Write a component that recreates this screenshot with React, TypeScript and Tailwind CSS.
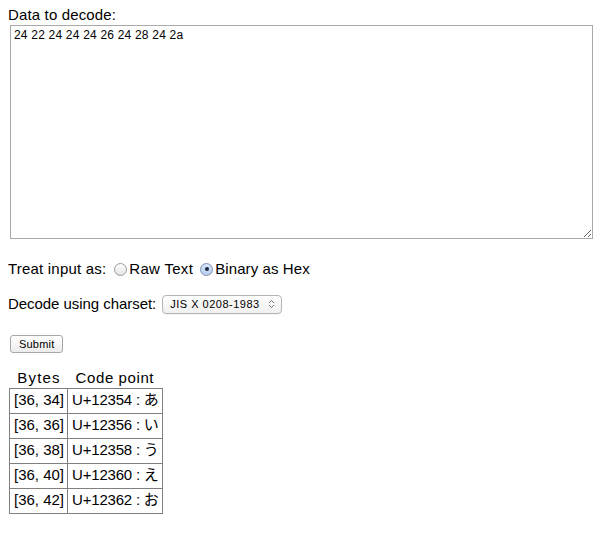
import React from "react";

export default function App() {
  const rows: [string, string, string][] = [
    ["[36, 34]", "U+12354", "あ"],
    ["[36, 36]", "U+12356", "い"],
    ["[36, 38]", "U+12358", "う"],
    ["[36, 40]", "U+12360", "え"],
    ["[36, 42]", "U+12362", "お"],
  ];
  return (
    <div className="w-[610px] h-[534px] bg-white text-black font-['Liberation_Sans','Noto_Sans_CJK_JP',sans-serif] pl-[8px] pt-[6px]">
      <div className="text-[15px] leading-[18px] tracking-[0.15px]">Data to decode:</div>
      <textarea
        className="block ml-[2px] mt-[1px] w-[583px] h-[214px] border border-[#a9a9a9] px-[3px] py-[2px] text-[12px] leading-[14px] tracking-[0.2px] resize-y outline-none font-['Liberation_Sans',sans-serif]"
        defaultValue="24 22 24 24 24 26 24 28 24 2a"
      />
      <div className="mt-[20px] h-[20px] flex items-center text-[15px]">
        <span className="tracking-[0.2px]">Treat input as:</span>
        <span className="ml-[8px] w-[13px] h-[13px] rounded-full border border-[#9a9a9a] bg-gradient-to-b from-[#fdfdfd] to-[#e4e4e4]" />
        <span className="ml-[2px] tracking-[0.3px]">Raw Text</span>
        <span className="ml-[7px] w-[13px] h-[13px] rounded-full border border-[#7c8fb3] bg-gradient-to-b from-[#d8e6f8] to-[#b6cdee] flex items-center justify-center">
          <span className="w-[4px] h-[4px] rounded-full bg-[#1e2a44]" />
        </span>
        <span className="ml-[2px] tracking-[0.1px]">Binary as Hex</span>
      </div>
      <div className="mt-[14px] h-[22px] flex items-center text-[15px]">
        <span className="tracking-[-0.05px]">Decode using charset:</span>
        <span className="ml-[6px] w-[120px] h-[19px] rounded-[4px] border border-[#b5b5b5] bg-gradient-to-b from-white to-[#f0f0f0] flex items-center pl-[7px] pr-[6px] text-[11px] tracking-[0.5px] shadow-[0_1px_0_rgba(0,0,0,0.05)]">
          <span className="flex-1">JIS X 0208-1983</span>
          <svg width="7" height="10" viewBox="0 0 7 10">
            <path d="M1 4 L3.5 1.5 L6 4" fill="none" stroke="#777" strokeWidth="1" />
            <path d="M1 6 L3.5 8.5 L6 6" fill="none" stroke="#777" strokeWidth="1" />
          </svg>
        </span>
      </div>
      <div className="mt-[16px] ml-[2px]">
        <button className="h-[18px] px-[8px] rounded-[3px] border border-[#a8a8a8] bg-gradient-to-b from-white to-[#ececec] text-[11px] leading-[16px] tracking-[0.2px]">
          Submit
        </button>
      </div>
      <table className="mt-[14px] ml-[1px] border-collapse text-[15px]">
        <thead>
          <tr>
            <th className="font-normal h-[19px] pl-[4px] pr-[3px] leading-[18px] tracking-[1.2px] text-center">Bytes</th>
            <th className="font-normal h-[19px] px-[3px] leading-[18px] tracking-[0.6px] text-center">Code point</th>
          </tr>
        </thead>
        <tbody>
          {rows.map(([b, c, k]) => (
            <tr key={b} className="h-[25px]">
              <td className="border border-[#808080] pl-[4px] pr-[3px]">{b}</td>
              <td className="border border-[#808080] pl-[4px] pr-[3px] tracking-[-0.2px]">
                {c} : {k}
              </td>
            </tr>
          ))}
        </tbody>
      </table>
    </div>
  );
}
